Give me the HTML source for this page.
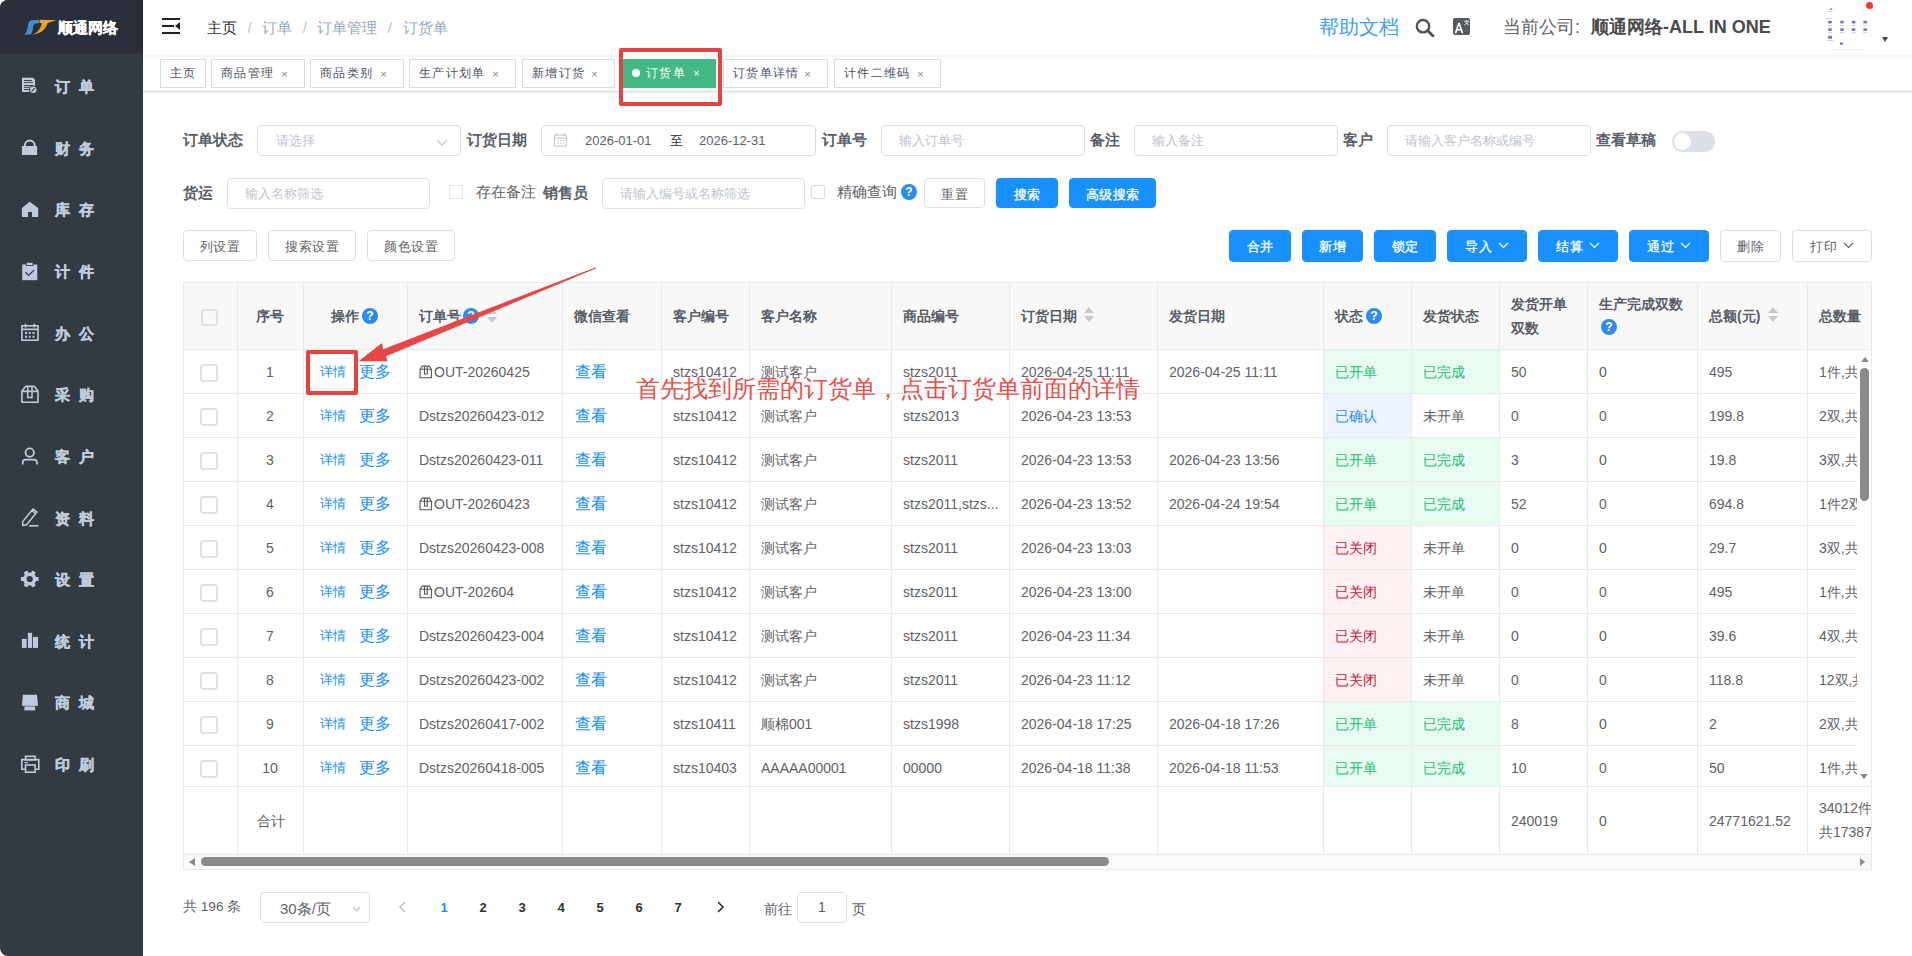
<!DOCTYPE html><html><head><meta charset="utf-8"><style>
*{box-sizing:border-box;margin:0;padding:0}
html,body{width:1912px;height:956px;overflow:hidden;background:#fff}
body{position:relative;font-family:"Liberation Sans",sans-serif;color:#606266}
.ab{position:absolute}
.side{position:absolute;left:0;top:0;width:143px;height:956px;background:#343a42;border-top-left-radius:8px;border-bottom-left-radius:8px;overflow:hidden}
.logo{position:absolute;left:0;top:0;width:143px;height:54px;background:#2b2f39}
.mi{position:absolute;left:0;width:143px;height:24px;line-height:24px;color:#bfcbd9;font-weight:bold;font-size:15.2px;letter-spacing:8.8px;-webkit-text-stroke:0.4px #bfcbd9}
.mi .t{position:absolute;left:55px;top:0;white-space:nowrap}
.mi svg{position:absolute;left:22px;top:4px}
.tag{position:absolute;top:59px;height:29px;letter-spacing:1.3px;border:1px solid #dadcdf;background:#fff;color:#495060;font-size:12px;line-height:27px;white-space:nowrap}
.tag .x{position:absolute;font-size:11px;color:#888}
.lbl{position:absolute;font-size:15.3px;font-weight:bold;color:#5a5e66;white-space:nowrap;line-height:20px}
.inp{position:absolute;height:31px;border:1px solid #dcdfe6;border-radius:4px;background:#fff}
.ph{position:absolute;font-size:13px;color:#c0c4cc;white-space:nowrap;line-height:20px}
.cb{position:absolute;width:14px;height:14px;border:1px solid #dcdfe6;border-radius:2px;background:#fff}
.btn{position:absolute;height:30px;border:1px solid #dcdfe6;border-radius:4px;background:#fff;color:#606266;font-size:13px;letter-spacing:0.5px;text-align:center;line-height:31px;white-space:nowrap}
.bp{background:#1890ff;border-color:#1890ff;color:#fff;-webkit-text-stroke:0.3px #fff}
.hl{position:absolute;background:#e8eaec}
.cell{position:absolute;white-space:nowrap;font-size:14px;color:#606266;line-height:20px;overflow:hidden}
.th{position:absolute;white-space:nowrap;font-size:14px;color:#585c64;font-weight:bold;line-height:24px}
.q{display:inline-block;width:16px;height:16px;border-radius:50%;background:#2d8cf0;color:#fff;font-size:12px;line-height:16px;text-align:center;font-weight:bold;vertical-align:1px;letter-spacing:0}
.lk{color:#1890ff}
.pg{position:absolute;top:898px;font-size:13px;font-weight:bold;color:#303133;line-height:20px;font-family:"Liberation Sans",sans-serif}
</style></head><body><div class="side"><div class="logo"></div><svg class="ab" style="left:20px;top:14px" width="40" height="26" viewBox="0 0 40 26">
<path d="M19 5.8 L11.5 6.2 C9 6.8 8 9 7.8 12 C7.6 15.5 6.5 18.5 4.3 20.7 L10.3 20.6 C12.2 19 12.8 16.5 13 14 C13.3 11 13.8 9.5 19 9 Z" fill="#3f8fd2"/>
<path d="M19.6 5.8 L36.5 6.2 C33 7.2 30 8.5 27.5 9 C26.5 13 24 18.5 12.8 20.9 C19 17.5 21 13 21.8 9 L19.6 9 Z" fill="#eda42a"/>
</svg><div class="ab" style="left:58px;top:18px;font-size:15px;font-weight:bold;color:#fff;line-height:20px;white-space:nowrap;-webkit-text-stroke:0.3px #fff">顺通网络</div><div class="mi" style="top:75.0px"><span class="t">订单</span></div><svg class="ab" style="left:15px;top:70px" width="30" height="30" viewBox="0 0 30 30"><path d="M7 7.7 H18 L20.1 9.8 V22 H7 Z" fill="#bfcbd9"/><path d="M9 10.5H17M9 12.4H18M9 15.5H18M9 17.3H15M9 19.5H14" stroke="#343a42" stroke-width="0.9"/><circle cx="18.2" cy="19.8" r="4.3" fill="#343a42"/><circle cx="18.2" cy="19.8" r="3.3" fill="#bfcbd9"/><path d="M16.6 21.4 L19.8 18.2" stroke="#343a42" stroke-width="1.1"/></svg><div class="mi" style="top:136.6px"><span class="t">财务</span></div><svg class="ab" style="left:15px;top:132px" width="30" height="30" viewBox="0 0 30 30"><path d="M9.9 14.5 V13.5 A4.9 4.9 0 0 1 19.7 13.5 V14.5" fill="none" stroke="#bfcbd9" stroke-width="2"/><rect x="6.9" y="14" width="15.2" height="9" fill="#bfcbd9"/></svg><div class="mi" style="top:198.3px"><span class="t">库存</span></div><svg class="ab" style="left:15px;top:194px" width="30" height="30" viewBox="0 0 30 30"><path d="M14.7 7.7 L23.2 14 V22.9 H17 V18 H13 V22.9 H6.9 V14 Z" fill="#bfcbd9"/></svg><div class="mi" style="top:259.9px"><span class="t">计件</span></div><svg class="ab" style="left:15px;top:256px" width="30" height="30" viewBox="0 0 30 30"><rect x="7.2" y="8.5" width="15.1" height="15.7" fill="#bfcbd9"/><rect x="11" y="6" width="7.4" height="4" fill="#343a42"/><rect x="11.8" y="6.8" width="5.8" height="2.4" fill="#bfcbd9"/><path d="M10.4 16.3 L13.5 19.4 L19.1 14.1" fill="none" stroke="#343a42" stroke-width="1.3"/></svg><div class="mi" style="top:321.5px"><span class="t">办公</span></div><svg class="ab" style="left:15px;top:317px" width="30" height="30" viewBox="0 0 30 30"><rect x="6.9" y="8.8" width="16.1" height="14.4" fill="none" stroke="#bfcbd9" stroke-width="1.6"/><path d="M6.9 12.4H23 M10.5 6.7V10.5 M19.3 6.7V10.5" stroke="#bfcbd9" stroke-width="1.6"/><path d="M10 15H12V17H10Z M13.7 15H15.7V17H13.7Z M17.5 15H19.5V17H17.5Z M10 18.8H12V20.8H10Z M13.7 18.8H15.7V20.8H13.7Z M17.5 18.8H19.5V20.8H17.5Z" fill="#bfcbd9"/></svg><div class="mi" style="top:383.2px"><span class="t">采购</span></div><svg class="ab" style="left:15px;top:379px" width="30" height="30" viewBox="0 0 30 30"><path d="M6.9 23.2 V12 L10.6 7.4 H19.4 L23 12 V23.2 Z M6.9 12.4 H23" fill="none" stroke="#bfcbd9" stroke-width="1.6" stroke-linejoin="round"/><path d="M12.7 7.4 V18.4 H17 V7.4" fill="none" stroke="#bfcbd9" stroke-width="1.5"/></svg><div class="mi" style="top:444.8px"><span class="t">客户</span></div><svg class="ab" style="left:15px;top:441px" width="30" height="30" viewBox="0 0 30 30"><circle cx="14.7" cy="11.6" r="4.2" fill="none" stroke="#bfcbd9" stroke-width="1.8"/><path d="M7.8 23.5 V21.2 Q7.8 18.6 10.5 18.6 H19 Q21.9 18.6 21.9 21.2 V23.5" fill="none" stroke="#bfcbd9" stroke-width="1.8"/></svg><div class="mi" style="top:506.5px"><span class="t">资料</span></div><svg class="ab" style="left:15px;top:502px" width="30" height="30" viewBox="0 0 30 30"><path d="M7.8 23.5 L7.7 19.6 L18.04 6.95 L21.96 10.05 L11.62 22.7 Z M16.8 8.5 L20.72 11.62" fill="none" stroke="#bfcbd9" stroke-width="1.5" stroke-linejoin="round"/><path d="M14.1 23.8 H23.5" stroke="#bfcbd9" stroke-width="1.6"/></svg><div class="mi" style="top:568.1px"><span class="t">设置</span></div><svg class="ab" style="left:15px;top:564px" width="30" height="30" viewBox="0 0 30 30"><g transform="translate(14.7 15)"><circle r="6.6" fill="#bfcbd9"/><g fill="#bfcbd9"><rect x="-2" y="-8.8" width="4" height="4" transform="rotate(30)"/><rect x="-2" y="-8.8" width="4" height="4" transform="rotate(90)"/><rect x="-2" y="-8.8" width="4" height="4" transform="rotate(150)"/><rect x="-2" y="-8.8" width="4" height="4" transform="rotate(210)"/><rect x="-2" y="-8.8" width="4" height="4" transform="rotate(270)"/><rect x="-2" y="-8.8" width="4" height="4" transform="rotate(330)"/></g><circle r="3.1" fill="#343a42"/></g></svg><div class="mi" style="top:629.7px"><span class="t">统计</span></div><svg class="ab" style="left:15px;top:625px" width="30" height="30" viewBox="0 0 30 30"><rect x="6.9" y="13.8" width="4.7" height="9.1" fill="#bfcbd9"/><rect x="12.9" y="7.8" width="4.2" height="15.1" fill="#bfcbd9"/><rect x="18" y="11.9" width="5" height="11" fill="#bfcbd9"/></svg><div class="mi" style="top:691.4px"><span class="t">商城</span></div><svg class="ab" style="left:15px;top:687px" width="30" height="30" viewBox="0 0 30 30"><path d="M7.8 7.8 H22 L23 18.4 Q21.5 19.6 20 18.6 Q18.5 19.6 17 18.6 Q15.5 19.6 14 18.6 Q12.5 19.6 11 18.6 Q9.5 19.6 7 18.4 Z" fill="#bfcbd9"/><rect x="9.4" y="19.4" width="10.7" height="4" fill="#bfcbd9"/></svg><div class="mi" style="top:753.0px"><span class="t">印刷</span></div><svg class="ab" style="left:15px;top:749px" width="30" height="30" viewBox="0 0 30 30"><rect x="10.5" y="7.3" width="9.6" height="3.5" fill="none" stroke="#bfcbd9" stroke-width="1.6"/><path d="M10 20.2 H6.8 V10.6 H23.8 V20.2 H20.5" fill="none" stroke="#bfcbd9" stroke-width="1.6"/><rect x="10.5" y="16" width="9.6" height="7.2" fill="#343a42" stroke="#bfcbd9" stroke-width="1.6"/><rect x="9.3" y="13" width="3.6" height="1.2" fill="#bfcbd9"/></svg></div><svg class="ab" style="left:162px;top:18px" width="18" height="16" viewBox="0 0 18 16">
<rect x="0" y="0" width="18" height="2" fill="#222"/><rect x="0" y="7" width="12" height="2" fill="#222"/><rect x="0" y="14" width="18" height="2" fill="#222"/>
<path d="M18 4 L13 8 L18 12 Z" fill="#222"/></svg><div class="ab" style="left:207px;top:18px;font-size:15px;line-height:20px;white-space:nowrap;color:#97a8be"><span style="color:#303133">主页</span><span style="margin:0 10.5px;color:#c0c4cc">/</span>订单<span style="margin:0 10.5px;color:#c0c4cc">/</span>订单管理<span style="margin:0 10.5px;color:#c0c4cc">/</span>订货单</div><div class="ab" style="left:1319px;top:14px;font-size:20px;line-height:26px;color:#409eff;white-space:nowrap">帮助文档</div><svg class="ab" style="left:1415px;top:18px" width="20" height="19" viewBox="0 0 20 19"><circle cx="8" cy="8.2" r="6.2" fill="none" stroke="#505459" stroke-width="2.4"/><path d="M12.6 12.6 L18 18" stroke="#505459" stroke-width="2.8" stroke-linecap="round"/></svg><svg class="ab" style="left:1453px;top:18px" width="17" height="17" viewBox="0 0 17 17"><rect width="17" height="17" rx="2" fill="#55595f"/><path d="M1.6 15.2 L5.2 4.8 H6.8 L10.4 15.2 H8.6 L7.7 12.5 H4.3 L3.4 15.2 Z M4.8 11 H7.2 L6 7.2 Z" fill="#fff"/><path d="M11.5 3.2 H16 M13.7 2 V3.2 M12 3.5 Q13.5 6 16 6.8 M15.6 3.5 Q14 6 11.4 6.8" stroke="#fff" stroke-width="0.8" fill="none"/></svg><div class="ab" style="left:1503px;top:14px;font-size:18px;line-height:26px;color:#606266;white-space:nowrap">当前公司:</div><div class="ab" style="left:1591px;top:14px;font-size:18px;line-height:26px;color:#4a4a4a;font-weight:bold;white-space:nowrap">顺通网络-ALL IN ONE</div><svg class="ab" style="left:1822px;top:2px" width="52" height="50" viewBox="1822 2 52 50"><path d="M1829 9.5 L1832.5 7.5 L1831.5 10 Z" fill="#e8643a"/><rect x="1828" y="11" width="4" height="0.8" fill="#ccc"/><rect x="1826" y="18" width="6" height="0.8" fill="#ccc"/><rect x="1828.2" y="20.8" width="3.6" height="2.6" fill="#7c6fd6"/><rect x="1828.0" y="24.9" width="4" height="0.7" fill="#bbb"/><rect x="1840.2" y="20.8" width="3.6" height="2.6" fill="#7c6fd6"/><rect x="1840.0" y="24.9" width="4" height="0.7" fill="#bbb"/><rect x="1851.8" y="20.8" width="3.6" height="2.6" fill="#7c6fd6"/><rect x="1851.6" y="24.9" width="4" height="0.7" fill="#bbb"/><rect x="1863.4" y="20.8" width="3.6" height="2.6" fill="#7c6fd6"/><rect x="1863.2" y="24.9" width="4" height="0.7" fill="#bbb"/><rect x="1828.2" y="28.3" width="3.6" height="2.6" fill="#7c6fd6"/><rect x="1828.0" y="32.4" width="4" height="0.7" fill="#bbb"/><rect x="1840.2" y="28.3" width="3.6" height="2.6" fill="#7c6fd6"/><rect x="1840.0" y="32.4" width="4" height="0.7" fill="#bbb"/><rect x="1851.8" y="28.3" width="3.6" height="2.6" fill="#7c6fd6"/><rect x="1851.6" y="32.4" width="4" height="0.7" fill="#bbb"/><rect x="1863.4" y="28.3" width="3.6" height="2.6" fill="#7c6fd6"/><rect x="1863.2" y="32.4" width="4" height="0.7" fill="#bbb"/><rect x="1828.2" y="35.8" width="3.8" height="3" fill="#7c6fd6"/><rect x="1827" y="40" width="6" height="0.7" fill="#bbb"/><rect x="1840" y="42.5" width="3" height="2.2" fill="#7c6fd6"/><rect x="1830" y="49" width="36" height="0.6" fill="#e4e4e4"/></svg><div class="ab" style="left:1866px;top:2px;width:7px;height:7px;border-radius:50%;background:#f33"></div><div class="ab" style="left:1882px;top:37px;width:0;height:0;border-left:3.5px solid transparent;border-right:3.5px solid transparent;border-top:5px solid #444"></div><div class="ab" style="left:143px;top:0;width:1769px;height:55px;box-shadow:0 1px 4px rgba(0,21,41,.08)"></div><div class="ab" style="left:143px;top:55px;width:1769px;height:37px;border-bottom:1px solid #d8dce5;box-shadow:0 1px 3px 0 rgba(0,0,0,.08)"></div><div class="tag" style="left:160px;width:46px"><span class="ab" style="left:9px;top:0">主页</span></div><div class="tag" style="left:211px;width:94px"><span class="ab" style="left:9px;top:0">商品管理</span><span class="x" style="right:15px;top:1px">×</span></div><div class="tag" style="left:310px;width:94px"><span class="ab" style="left:9px;top:0">商品类别</span><span class="x" style="right:15px;top:1px">×</span></div><div class="tag" style="left:409px;width:107px"><span class="ab" style="left:9px;top:0">生产计划单</span><span class="x" style="right:15px;top:1px">×</span></div><div class="tag" style="left:522px;width:93px"><span class="ab" style="left:9px;top:0">新增订货</span><span class="x" style="right:15px;top:1px">×</span></div><div class="tag" style="left:723px;width:105px"><span class="ab" style="left:9px;top:0">订货单详情</span><span class="x" style="right:15px;top:1px">×</span></div><div class="tag" style="left:834px;width:107px"><span class="ab" style="left:9px;top:0">计件二维码</span><span class="x" style="right:15px;top:1px">×</span></div><div class="tag" style="left:623px;width:93px;background:#42b983;border-color:#42b983;color:#fff"><span class="ab" style="left:8px;top:9px;width:8px;height:8px;border-radius:50%;background:#fff"></span><span class="ab" style="left:22px;top:0">订货单</span><span class="x" style="right:14px;top:0;color:#fff">×</span></div><div class="lbl" style="left:183px;top:130px">订单状态</div><div class="inp" style="left:257px;top:125px;width:204px"><span class="ph" style="left:18px;top:5px">请选择</span></div><svg class="ab" style="left:436px;top:139px" width="12" height="8" viewBox="0 0 12 8"><path d="M1 1 L6 6 L11 1" fill="none" stroke="#c0c4cc" stroke-width="1.3"/></svg><div class="lbl" style="left:467px;top:130px">订货日期</div><div class="inp" style="left:541px;top:125px;width:275px"></div><svg class="ab" style="left:554px;top:133px" width="13" height="14" viewBox="0 0 13 14"><rect x="0.5" y="2" width="12" height="11" fill="none" stroke="#c0c4cc"/><path d="M0.5 5 H12.5 M3 0 V3 M10 0 V3 M3 7.5H4.5 M6 7.5H7.5 M9 7.5H10.5 M3 10H4.5 M6 10H7.5 M9 10H10.5" stroke="#c0c4cc"/></svg><div class="cell" style="left:585px;top:131px;font-size:13px;color:#606266">2026-01-01</div><div class="cell" style="left:670px;top:131px;font-size:13px;color:#303133">至</div><div class="cell" style="left:699px;top:131px;font-size:13px;color:#606266">2026-12-31</div><div class="lbl" style="left:822px;top:130px">订单号</div><div class="inp" style="left:881px;top:125px;width:204px"><span class="ph" style="left:17px;top:5px">输入订单号</span></div><div class="lbl" style="left:1090px;top:130px">备注</div><div class="inp" style="left:1134px;top:125px;width:204px"><span class="ph" style="left:17px;top:5px">输入备注</span></div><div class="lbl" style="left:1343px;top:130px">客户</div><div class="inp" style="left:1387px;top:125px;width:204px"><span class="ph" style="left:17px;top:5px">请输入客户名称或编号</span></div><div class="lbl" style="left:1596px;top:130px">查看草稿</div><div class="ab" style="left:1672px;top:131px;width:43px;height:21px;border-radius:11px;background:#dcdfe6"><div class="ab" style="left:2px;top:2px;width:17px;height:17px;border-radius:50%;background:#fff"></div></div><div class="lbl" style="left:183px;top:183px">货运</div><div class="inp" style="left:227px;top:178px;width:203px"><span class="ph" style="left:17px;top:5px">输入名称筛选</span></div><div class="cb" style="left:449px;top:185px"></div><div class="ab" style="left:476px;top:182px;font-size:14.6px;color:#606266;line-height:20px;white-space:nowrap">存在备注</div><div class="lbl" style="left:543px;top:183px">销售员</div><div class="inp" style="left:602px;top:178px;width:203px"><span class="ph" style="left:17px;top:5px">请输入编号或名称筛选</span></div><div class="cb" style="left:811px;top:185px"></div><div class="ab" style="left:837px;top:182px;font-size:14.6px;color:#606266;line-height:20px;white-space:nowrap">精确查询</div><div class="ab" style="left:901px;top:184px;width:16px;height:16px;border-radius:50%;background:#2d8cf0;color:#fff;font-size:12px;line-height:16px;text-align:center;font-weight:bold">?</div><div class="btn" style="left:924px;top:178px;width:61px">重置</div><div class="btn bp" style="left:996px;top:178px;width:62px">搜索</div><div class="btn bp" style="left:1069px;top:178px;width:87px">高级搜索</div><div class="btn" style="left:183px;top:230px;width:74px;height:31px">列设置</div><div class="btn" style="left:268px;top:230px;width:88px;height:31px">搜索设置</div><div class="btn" style="left:367px;top:230px;width:88px;height:31px">颜色设置</div><div class="btn bp" style="left:1229px;top:230px;width:62px;height:32px;line-height:31.5px">合并</div><div class="btn bp" style="left:1302px;top:230px;width:61px;height:32px;line-height:31.5px">新增</div><div class="btn bp" style="left:1374px;top:230px;width:62px;height:32px;line-height:31.5px">锁定</div><div class="btn bp" style="left:1447px;top:230px;width:80px;height:32px;line-height:31.5px">导入<svg width="11" height="7" viewBox="0 0 11 7" style="margin-left:6px;vertical-align:2px"><path d="M1 1 L5.5 5.5 L10 1" fill="none" stroke="#fff" stroke-width="1.2"/></svg></div><div class="btn bp" style="left:1538px;top:230px;width:80px;height:32px;line-height:31.5px">结算<svg width="11" height="7" viewBox="0 0 11 7" style="margin-left:6px;vertical-align:2px"><path d="M1 1 L5.5 5.5 L10 1" fill="none" stroke="#fff" stroke-width="1.2"/></svg></div><div class="btn bp" style="left:1629px;top:230px;width:80px;height:32px;line-height:31.5px">通过<svg width="11" height="7" viewBox="0 0 11 7" style="margin-left:6px;vertical-align:2px"><path d="M1 1 L5.5 5.5 L10 1" fill="none" stroke="#fff" stroke-width="1.2"/></svg></div><div class="btn" style="left:1720px;top:230px;width:61px;height:32px;line-height:31.5px">删除</div><div class="btn" style="left:1792px;top:230px;width:80px;height:32px;line-height:31.5px">打印<svg width="11" height="7" viewBox="0 0 11 7" style="margin-left:6px;vertical-align:2px"><path d="M1 1 L5.5 5.5 L10 1" fill="none" stroke="#606266" stroke-width="1.2"/></svg></div><div class="ab" style="left:183px;top:282px;width:1689px;height:588px;border:1px solid #e8eaec;background:#fff"></div><div class="ab" style="left:184px;top:283px;width:1687px;height:66px;background:#f8f8f9"></div><div class="ab" style="left:1324px;top:350px;width:87px;height:43px;background:#e7fbee"></div><div class="ab" style="left:1412px;top:350px;width:87px;height:43px;background:#e7fbee"></div><div class="ab" style="left:1324px;top:394px;width:87px;height:43px;background:#ebf4ff"></div><div class="ab" style="left:1324px;top:438px;width:87px;height:43px;background:#e7fbee"></div><div class="ab" style="left:1412px;top:438px;width:87px;height:43px;background:#e7fbee"></div><div class="ab" style="left:1324px;top:482px;width:87px;height:43px;background:#e7fbee"></div><div class="ab" style="left:1412px;top:482px;width:87px;height:43px;background:#e7fbee"></div><div class="ab" style="left:1324px;top:526px;width:87px;height:43px;background:#fdf1f2"></div><div class="ab" style="left:1324px;top:570px;width:87px;height:43px;background:#fdf1f2"></div><div class="ab" style="left:1324px;top:614px;width:87px;height:43px;background:#fdf1f2"></div><div class="ab" style="left:1324px;top:658px;width:87px;height:43px;background:#fdf1f2"></div><div class="ab" style="left:1324px;top:702px;width:87px;height:43px;background:#e7fbee"></div><div class="ab" style="left:1412px;top:702px;width:87px;height:43px;background:#e7fbee"></div><div class="ab" style="left:1324px;top:746px;width:87px;height:40px;background:#e7fbee"></div><div class="ab" style="left:1412px;top:746px;width:87px;height:40px;background:#e7fbee"></div><div class="hl" style="left:237px;top:283px;width:1px;height:571px"></div><div class="hl" style="left:303px;top:283px;width:1px;height:571px"></div><div class="hl" style="left:407px;top:283px;width:1px;height:571px"></div><div class="hl" style="left:562px;top:283px;width:1px;height:571px"></div><div class="hl" style="left:661px;top:283px;width:1px;height:571px"></div><div class="hl" style="left:749px;top:283px;width:1px;height:571px"></div><div class="hl" style="left:891px;top:283px;width:1px;height:571px"></div><div class="hl" style="left:1009px;top:283px;width:1px;height:571px"></div><div class="hl" style="left:1157px;top:283px;width:1px;height:571px"></div><div class="hl" style="left:1323px;top:283px;width:1px;height:571px"></div><div class="hl" style="left:1411px;top:283px;width:1px;height:571px"></div><div class="hl" style="left:1499px;top:283px;width:1px;height:571px"></div><div class="hl" style="left:1587px;top:283px;width:1px;height:571px"></div><div class="hl" style="left:1697px;top:283px;width:1px;height:571px"></div><div class="hl" style="left:1807px;top:283px;width:1px;height:571px"></div><div class="hl" style="left:184px;top:349px;width:1687px;height:1px"></div><div class="hl" style="left:184px;top:393px;width:1673px;height:1px"></div><div class="hl" style="left:184px;top:437px;width:1673px;height:1px"></div><div class="hl" style="left:184px;top:481px;width:1673px;height:1px"></div><div class="hl" style="left:184px;top:525px;width:1673px;height:1px"></div><div class="hl" style="left:184px;top:569px;width:1673px;height:1px"></div><div class="hl" style="left:184px;top:613px;width:1673px;height:1px"></div><div class="hl" style="left:184px;top:657px;width:1673px;height:1px"></div><div class="hl" style="left:184px;top:701px;width:1673px;height:1px"></div><div class="hl" style="left:184px;top:745px;width:1673px;height:1px"></div><div class="hl" style="left:184px;top:786px;width:1687px;height:1px"></div><div class="hl" style="left:184px;top:854px;width:1687px;height:1px"></div><div class="cb" style="left:201px;top:309px;width:17px;height:17px;border:2px solid #e2e2e4;border-radius:3px;background:transparent"></div><div class="th" style="left:256px;top:304px">序号</div><div class="th" style="left:331px;top:304px">操作<span class="q" style="margin-left:3px">?</span></div><div class="th" style="left:419px;top:304px">订单号<span class="q" style="margin-left:2px">?</span></div><div class="ab" style="left:486px;top:307px"><svg width="12" height="17" viewBox="0 0 12 17" style="vertical-align:-3px;margin-left:0px"><path d="M6 1 L11 7 L1 7 Z M6 16 L11 10 L1 10 Z" fill="#c5c8ce"/></svg></div><div class="th" style="left:574px;top:304px">微信查看</div><div class="th" style="left:673px;top:304px">客户编号</div><div class="th" style="left:761px;top:304px">客户名称</div><div class="th" style="left:903px;top:304px">商品编号</div><div class="th" style="left:1021px;top:304px">订货日期</div><div class="ab" style="left:1083px;top:306px"><svg width="12" height="17" viewBox="0 0 12 17" style="vertical-align:-3px;margin-left:0px"><path d="M6 1 L11 7 L1 7 Z M6 16 L11 10 L1 10 Z" fill="#c5c8ce"/></svg></div><div class="th" style="left:1169px;top:304px">发货日期</div><div class="th" style="left:1335px;top:304px">状态<span class="q" style="margin-left:3px">?</span></div><div class="th" style="left:1423px;top:304px">发货状态</div><div class="th" style="left:1511px;top:292px">发货开单<br>双数</div><div class="th" style="left:1599px;top:292px">生产完成双数<br><span class="q" style="margin-left:2px;vertical-align:2px">?</span></div><div class="th" style="left:1709px;top:304px">总额(元)</div><div class="ab" style="left:1767px;top:306px"><svg width="12" height="17" viewBox="0 0 12 17" style="vertical-align:-3px;margin-left:0px"><path d="M6 1 L11 7 L1 7 Z M6 16 L11 10 L1 10 Z" fill="#c5c8ce"/></svg></div><div class="th" style="left:1819px;top:304px">总数量</div><div class="cb" style="left:200px;top:364px;width:18px;height:18px;border:2px solid #e2e2e4;border-radius:3px"></div><div class="cell" style="left:237px;top:362px;width:66px;text-align:center">1</div><div class="cell" style="left:320px;top:362px;color:#1890ff;font-size:13.4px">详情</div><div class="cell" style="left:359px;top:361px;color:#1890ff;font-size:16px;line-height:22px">更多</div><svg class="ab" style="left:419px;top:365px" width="14" height="14" viewBox="0 0 14 14"><path d="M1.1 12.8 V4.3 L3.2 1.1 H10.4 L12.4 4.3 V12.8 Z M1.1 4.3 H12.4 M5.5 1.1 V9 H8.3 V1.1" fill="none" stroke="#555" stroke-width="1.1"/></svg><div class="cell" style="left:434px;top:362px;">OUT-20260425</div><div class="cell" style="left:575px;top:361px;color:#1890ff;font-size:16px;line-height:22px">查看</div><div class="cell" style="left:673px;top:362px;">stzs10412</div><div class="cell" style="left:761px;top:362px;">测试客户</div><div class="cell" style="left:903px;top:362px;">stzs2011</div><div class="cell" style="left:1021px;top:362px;">2026-04-25 11:11</div><div class="cell" style="left:1169px;top:362px;">2026-04-25 11:11</div><div class="cell" style="left:1335px;top:362px;color:#22c07c">已开单</div><div class="cell" style="left:1423px;top:362px;color:#22c07c">已完成</div><div class="cell" style="left:1511px;top:362px;">50</div><div class="cell" style="left:1599px;top:362px;">0</div><div class="cell" style="left:1709px;top:362px;">495</div><div class="cell" style="left:1819px;top:362px;width:38px">1件,共</div><div class="cb" style="left:200px;top:408px;width:18px;height:18px;border:2px solid #e2e2e4;border-radius:3px"></div><div class="cell" style="left:237px;top:406px;width:66px;text-align:center">2</div><div class="cell" style="left:320px;top:406px;color:#1890ff;font-size:13.4px">详情</div><div class="cell" style="left:359px;top:405px;color:#1890ff;font-size:16px;line-height:22px">更多</div><div class="cell" style="left:419px;top:406px;">Dstzs20260423-012</div><div class="cell" style="left:575px;top:405px;color:#1890ff;font-size:16px;line-height:22px">查看</div><div class="cell" style="left:673px;top:406px;">stzs10412</div><div class="cell" style="left:761px;top:406px;">测试客户</div><div class="cell" style="left:903px;top:406px;">stzs2013</div><div class="cell" style="left:1021px;top:406px;">2026-04-23 13:53</div><div class="cell" style="left:1169px;top:406px;"></div><div class="cell" style="left:1335px;top:406px;color:#2d8cf0">已确认</div><div class="cell" style="left:1423px;top:406px;color:#606266">未开单</div><div class="cell" style="left:1511px;top:406px;">0</div><div class="cell" style="left:1599px;top:406px;">0</div><div class="cell" style="left:1709px;top:406px;">199.8</div><div class="cell" style="left:1819px;top:406px;width:38px">2双,共</div><div class="cb" style="left:200px;top:452px;width:18px;height:18px;border:2px solid #e2e2e4;border-radius:3px"></div><div class="cell" style="left:237px;top:450px;width:66px;text-align:center">3</div><div class="cell" style="left:320px;top:450px;color:#1890ff;font-size:13.4px">详情</div><div class="cell" style="left:359px;top:449px;color:#1890ff;font-size:16px;line-height:22px">更多</div><div class="cell" style="left:419px;top:450px;">Dstzs20260423-011</div><div class="cell" style="left:575px;top:449px;color:#1890ff;font-size:16px;line-height:22px">查看</div><div class="cell" style="left:673px;top:450px;">stzs10412</div><div class="cell" style="left:761px;top:450px;">测试客户</div><div class="cell" style="left:903px;top:450px;">stzs2011</div><div class="cell" style="left:1021px;top:450px;">2026-04-23 13:53</div><div class="cell" style="left:1169px;top:450px;">2026-04-23 13:56</div><div class="cell" style="left:1335px;top:450px;color:#22c07c">已开单</div><div class="cell" style="left:1423px;top:450px;color:#22c07c">已完成</div><div class="cell" style="left:1511px;top:450px;">3</div><div class="cell" style="left:1599px;top:450px;">0</div><div class="cell" style="left:1709px;top:450px;">19.8</div><div class="cell" style="left:1819px;top:450px;width:38px">3双,共</div><div class="cb" style="left:200px;top:496px;width:18px;height:18px;border:2px solid #e2e2e4;border-radius:3px"></div><div class="cell" style="left:237px;top:494px;width:66px;text-align:center">4</div><div class="cell" style="left:320px;top:494px;color:#1890ff;font-size:13.4px">详情</div><div class="cell" style="left:359px;top:493px;color:#1890ff;font-size:16px;line-height:22px">更多</div><svg class="ab" style="left:419px;top:497px" width="14" height="14" viewBox="0 0 14 14"><path d="M1.1 12.8 V4.3 L3.2 1.1 H10.4 L12.4 4.3 V12.8 Z M1.1 4.3 H12.4 M5.5 1.1 V9 H8.3 V1.1" fill="none" stroke="#555" stroke-width="1.1"/></svg><div class="cell" style="left:434px;top:494px;">OUT-20260423</div><div class="cell" style="left:575px;top:493px;color:#1890ff;font-size:16px;line-height:22px">查看</div><div class="cell" style="left:673px;top:494px;">stzs10412</div><div class="cell" style="left:761px;top:494px;">测试客户</div><div class="cell" style="left:903px;top:494px;">stzs2011,stzs...</div><div class="cell" style="left:1021px;top:494px;">2026-04-23 13:52</div><div class="cell" style="left:1169px;top:494px;">2026-04-24 19:54</div><div class="cell" style="left:1335px;top:494px;color:#22c07c">已开单</div><div class="cell" style="left:1423px;top:494px;color:#22c07c">已完成</div><div class="cell" style="left:1511px;top:494px;">52</div><div class="cell" style="left:1599px;top:494px;">0</div><div class="cell" style="left:1709px;top:494px;">694.8</div><div class="cell" style="left:1819px;top:494px;width:38px">1件2双</div><div class="cb" style="left:200px;top:540px;width:18px;height:18px;border:2px solid #e2e2e4;border-radius:3px"></div><div class="cell" style="left:237px;top:538px;width:66px;text-align:center">5</div><div class="cell" style="left:320px;top:538px;color:#1890ff;font-size:13.4px">详情</div><div class="cell" style="left:359px;top:537px;color:#1890ff;font-size:16px;line-height:22px">更多</div><div class="cell" style="left:419px;top:538px;">Dstzs20260423-008</div><div class="cell" style="left:575px;top:537px;color:#1890ff;font-size:16px;line-height:22px">查看</div><div class="cell" style="left:673px;top:538px;">stzs10412</div><div class="cell" style="left:761px;top:538px;">测试客户</div><div class="cell" style="left:903px;top:538px;">stzs2011</div><div class="cell" style="left:1021px;top:538px;">2026-04-23 13:03</div><div class="cell" style="left:1169px;top:538px;"></div><div class="cell" style="left:1335px;top:538px;color:#d0123a">已关闭</div><div class="cell" style="left:1423px;top:538px;color:#606266">未开单</div><div class="cell" style="left:1511px;top:538px;">0</div><div class="cell" style="left:1599px;top:538px;">0</div><div class="cell" style="left:1709px;top:538px;">29.7</div><div class="cell" style="left:1819px;top:538px;width:38px">3双,共</div><div class="cb" style="left:200px;top:584px;width:18px;height:18px;border:2px solid #e2e2e4;border-radius:3px"></div><div class="cell" style="left:237px;top:582px;width:66px;text-align:center">6</div><div class="cell" style="left:320px;top:582px;color:#1890ff;font-size:13.4px">详情</div><div class="cell" style="left:359px;top:581px;color:#1890ff;font-size:16px;line-height:22px">更多</div><svg class="ab" style="left:419px;top:585px" width="14" height="14" viewBox="0 0 14 14"><path d="M1.1 12.8 V4.3 L3.2 1.1 H10.4 L12.4 4.3 V12.8 Z M1.1 4.3 H12.4 M5.5 1.1 V9 H8.3 V1.1" fill="none" stroke="#555" stroke-width="1.1"/></svg><div class="cell" style="left:434px;top:582px;">OUT-202604</div><div class="cell" style="left:575px;top:581px;color:#1890ff;font-size:16px;line-height:22px">查看</div><div class="cell" style="left:673px;top:582px;">stzs10412</div><div class="cell" style="left:761px;top:582px;">测试客户</div><div class="cell" style="left:903px;top:582px;">stzs2011</div><div class="cell" style="left:1021px;top:582px;">2026-04-23 13:00</div><div class="cell" style="left:1169px;top:582px;"></div><div class="cell" style="left:1335px;top:582px;color:#d0123a">已关闭</div><div class="cell" style="left:1423px;top:582px;color:#606266">未开单</div><div class="cell" style="left:1511px;top:582px;">0</div><div class="cell" style="left:1599px;top:582px;">0</div><div class="cell" style="left:1709px;top:582px;">495</div><div class="cell" style="left:1819px;top:582px;width:38px">1件,共</div><div class="cb" style="left:200px;top:628px;width:18px;height:18px;border:2px solid #e2e2e4;border-radius:3px"></div><div class="cell" style="left:237px;top:626px;width:66px;text-align:center">7</div><div class="cell" style="left:320px;top:626px;color:#1890ff;font-size:13.4px">详情</div><div class="cell" style="left:359px;top:625px;color:#1890ff;font-size:16px;line-height:22px">更多</div><div class="cell" style="left:419px;top:626px;">Dstzs20260423-004</div><div class="cell" style="left:575px;top:625px;color:#1890ff;font-size:16px;line-height:22px">查看</div><div class="cell" style="left:673px;top:626px;">stzs10412</div><div class="cell" style="left:761px;top:626px;">测试客户</div><div class="cell" style="left:903px;top:626px;">stzs2011</div><div class="cell" style="left:1021px;top:626px;">2026-04-23 11:34</div><div class="cell" style="left:1169px;top:626px;"></div><div class="cell" style="left:1335px;top:626px;color:#d0123a">已关闭</div><div class="cell" style="left:1423px;top:626px;color:#606266">未开单</div><div class="cell" style="left:1511px;top:626px;">0</div><div class="cell" style="left:1599px;top:626px;">0</div><div class="cell" style="left:1709px;top:626px;">39.6</div><div class="cell" style="left:1819px;top:626px;width:38px">4双,共</div><div class="cb" style="left:200px;top:672px;width:18px;height:18px;border:2px solid #e2e2e4;border-radius:3px"></div><div class="cell" style="left:237px;top:670px;width:66px;text-align:center">8</div><div class="cell" style="left:320px;top:670px;color:#1890ff;font-size:13.4px">详情</div><div class="cell" style="left:359px;top:669px;color:#1890ff;font-size:16px;line-height:22px">更多</div><div class="cell" style="left:419px;top:670px;">Dstzs20260423-002</div><div class="cell" style="left:575px;top:669px;color:#1890ff;font-size:16px;line-height:22px">查看</div><div class="cell" style="left:673px;top:670px;">stzs10412</div><div class="cell" style="left:761px;top:670px;">测试客户</div><div class="cell" style="left:903px;top:670px;">stzs2011</div><div class="cell" style="left:1021px;top:670px;">2026-04-23 11:12</div><div class="cell" style="left:1169px;top:670px;"></div><div class="cell" style="left:1335px;top:670px;color:#d0123a">已关闭</div><div class="cell" style="left:1423px;top:670px;color:#606266">未开单</div><div class="cell" style="left:1511px;top:670px;">0</div><div class="cell" style="left:1599px;top:670px;">0</div><div class="cell" style="left:1709px;top:670px;">118.8</div><div class="cell" style="left:1819px;top:670px;width:38px">12双,共</div><div class="cb" style="left:200px;top:716px;width:18px;height:18px;border:2px solid #e2e2e4;border-radius:3px"></div><div class="cell" style="left:237px;top:714px;width:66px;text-align:center">9</div><div class="cell" style="left:320px;top:714px;color:#1890ff;font-size:13.4px">详情</div><div class="cell" style="left:359px;top:713px;color:#1890ff;font-size:16px;line-height:22px">更多</div><div class="cell" style="left:419px;top:714px;">Dstzs20260417-002</div><div class="cell" style="left:575px;top:713px;color:#1890ff;font-size:16px;line-height:22px">查看</div><div class="cell" style="left:673px;top:714px;">stzs10411</div><div class="cell" style="left:761px;top:714px;">顺棉001</div><div class="cell" style="left:903px;top:714px;">stzs1998</div><div class="cell" style="left:1021px;top:714px;">2026-04-18 17:25</div><div class="cell" style="left:1169px;top:714px;">2026-04-18 17:26</div><div class="cell" style="left:1335px;top:714px;color:#22c07c">已开单</div><div class="cell" style="left:1423px;top:714px;color:#22c07c">已完成</div><div class="cell" style="left:1511px;top:714px;">8</div><div class="cell" style="left:1599px;top:714px;">0</div><div class="cell" style="left:1709px;top:714px;">2</div><div class="cell" style="left:1819px;top:714px;width:38px">2双,共</div><div class="cb" style="left:200px;top:760px;width:18px;height:18px;border:2px solid #e2e2e4;border-radius:3px"></div><div class="cell" style="left:237px;top:758px;width:66px;text-align:center">10</div><div class="cell" style="left:320px;top:758px;color:#1890ff;font-size:13.4px">详情</div><div class="cell" style="left:359px;top:757px;color:#1890ff;font-size:16px;line-height:22px">更多</div><div class="cell" style="left:419px;top:758px;">Dstzs20260418-005</div><div class="cell" style="left:575px;top:757px;color:#1890ff;font-size:16px;line-height:22px">查看</div><div class="cell" style="left:673px;top:758px;">stzs10403</div><div class="cell" style="left:761px;top:758px;">AAAAA00001</div><div class="cell" style="left:903px;top:758px;">00000</div><div class="cell" style="left:1021px;top:758px;">2026-04-18 11:38</div><div class="cell" style="left:1169px;top:758px;">2026-04-18 11:53</div><div class="cell" style="left:1335px;top:758px;color:#22c07c">已开单</div><div class="cell" style="left:1423px;top:758px;color:#22c07c">已完成</div><div class="cell" style="left:1511px;top:758px;">10</div><div class="cell" style="left:1599px;top:758px;">0</div><div class="cell" style="left:1709px;top:758px;">50</div><div class="cell" style="left:1819px;top:758px;width:38px">1件,共</div><div class="cell" style="left:257px;top:811px;">合计</div><div class="cell" style="left:1511px;top:811px;">240019</div><div class="cell" style="left:1599px;top:811px;">0</div><div class="cell" style="left:1709px;top:811px;">24771621.52</div><div class="cell" style="left:1819px;top:796px;width:52px;line-height:24px">34012件<br>共17387</div><div class="ab" style="left:1857px;top:350px;width:14px;height:436px;background:#fff"></div><div class="ab" style="left:1861px;top:357px;width:0;height:0;border-left:4.5px solid transparent;border-right:4.5px solid transparent;border-bottom:5px solid #8a8a8a"></div><div class="ab" style="left:1860px;top:368px;width:9px;height:133px;border-radius:5px;background:#8a8a8a"></div><div class="ab" style="left:1860px;top:774px;width:0;height:0;border-left:4.5px solid transparent;border-right:4.5px solid transparent;border-top:5px solid #8a8a8a"></div><div class="ab" style="left:184px;top:855px;width:1687px;height:14px;background:#f9f9f9"></div><div class="ab" style="left:188.5px;top:858px;width:0;height:0;border-top:4.5px solid transparent;border-bottom:4.5px solid transparent;border-right:6px solid #8a8a8a"></div><div class="ab" style="left:201px;top:857px;width:908px;height:9px;border-radius:5px;background:#8a8a8a"></div><div class="ab" style="left:1860px;top:858px;width:0;height:0;border-top:4px solid transparent;border-bottom:4px solid transparent;border-left:5px solid #8a8a8a"></div><div class="ab" style="left:183px;top:897px;font-size:13.6px;line-height:20px;color:#606266;white-space:nowrap">共 196 条</div><div class="inp" style="left:260px;top:892px;width:110px"><span class="ab" style="left:19px;top:6px;font-size:15px;line-height:20px;color:#606266;white-space:nowrap">30条/页</span></div><svg class="ab" style="left:352px;top:906px" width="9" height="6" viewBox="0 0 9 6"><path d="M1 1 L4.5 5 L8 1" fill="none" stroke="#c0c4cc" stroke-width="1.2"/></svg><svg class="ab" style="left:398px;top:901px" width="8" height="12" viewBox="0 0 8 12"><path d="M7 1 L2 6 L7 11" fill="none" stroke="#c0c4cc" stroke-width="1.6"/></svg><div class="pg" style="left:434px;width:20px;text-align:center;color:#1890ff">1</div><div class="pg" style="left:473px;width:20px;text-align:center;">2</div><div class="pg" style="left:512px;width:20px;text-align:center;">3</div><div class="pg" style="left:551px;width:20px;text-align:center;">4</div><div class="pg" style="left:590px;width:20px;text-align:center;">5</div><div class="pg" style="left:629px;width:20px;text-align:center;">6</div><div class="pg" style="left:668px;width:20px;text-align:center;">7</div><svg class="ab" style="left:717px;top:901px" width="8" height="12" viewBox="0 0 8 12"><path d="M1 1 L6 6 L1 11" fill="none" stroke="#303133" stroke-width="1.6"/></svg><div class="ab" style="left:764px;top:899px;font-size:14px;line-height:20px;color:#606266;white-space:nowrap">前往</div><div class="inp" style="left:797px;top:892px;width:50px"><span class="ab" style="left:0;width:48px;text-align:center;top:4px;font-size:14px;line-height:20px;color:#606266">1</span></div><div class="ab" style="left:852px;top:899px;font-size:14px;line-height:20px;color:#606266;white-space:nowrap">页</div><div class="ab" style="left:619px;top:48px;width:103px;height:58px;border:4px solid #e8423f;border-radius:2px"></div><div class="ab" style="left:306px;top:350px;width:52px;height:45px;border:4px solid #e8423f;border-radius:2px"></div><svg class="ab" style="left:0;top:0" width="1912" height="956"><path d="M595.5 268 L382.7 350 L381.6 344 L360.2 360.6 L386.8 360.6 L385.3 356 Z" fill="#e84545" stroke="#e84545" stroke-width="1.2" stroke-linejoin="round"/></svg><div class="ab" style="left:636px;top:374px;font-size:24px;line-height:30px;color:#e84e4a;font-weight:500;white-space:nowrap">首先找到所需的订货单，点击订货单前面的详情</div></body></html>
